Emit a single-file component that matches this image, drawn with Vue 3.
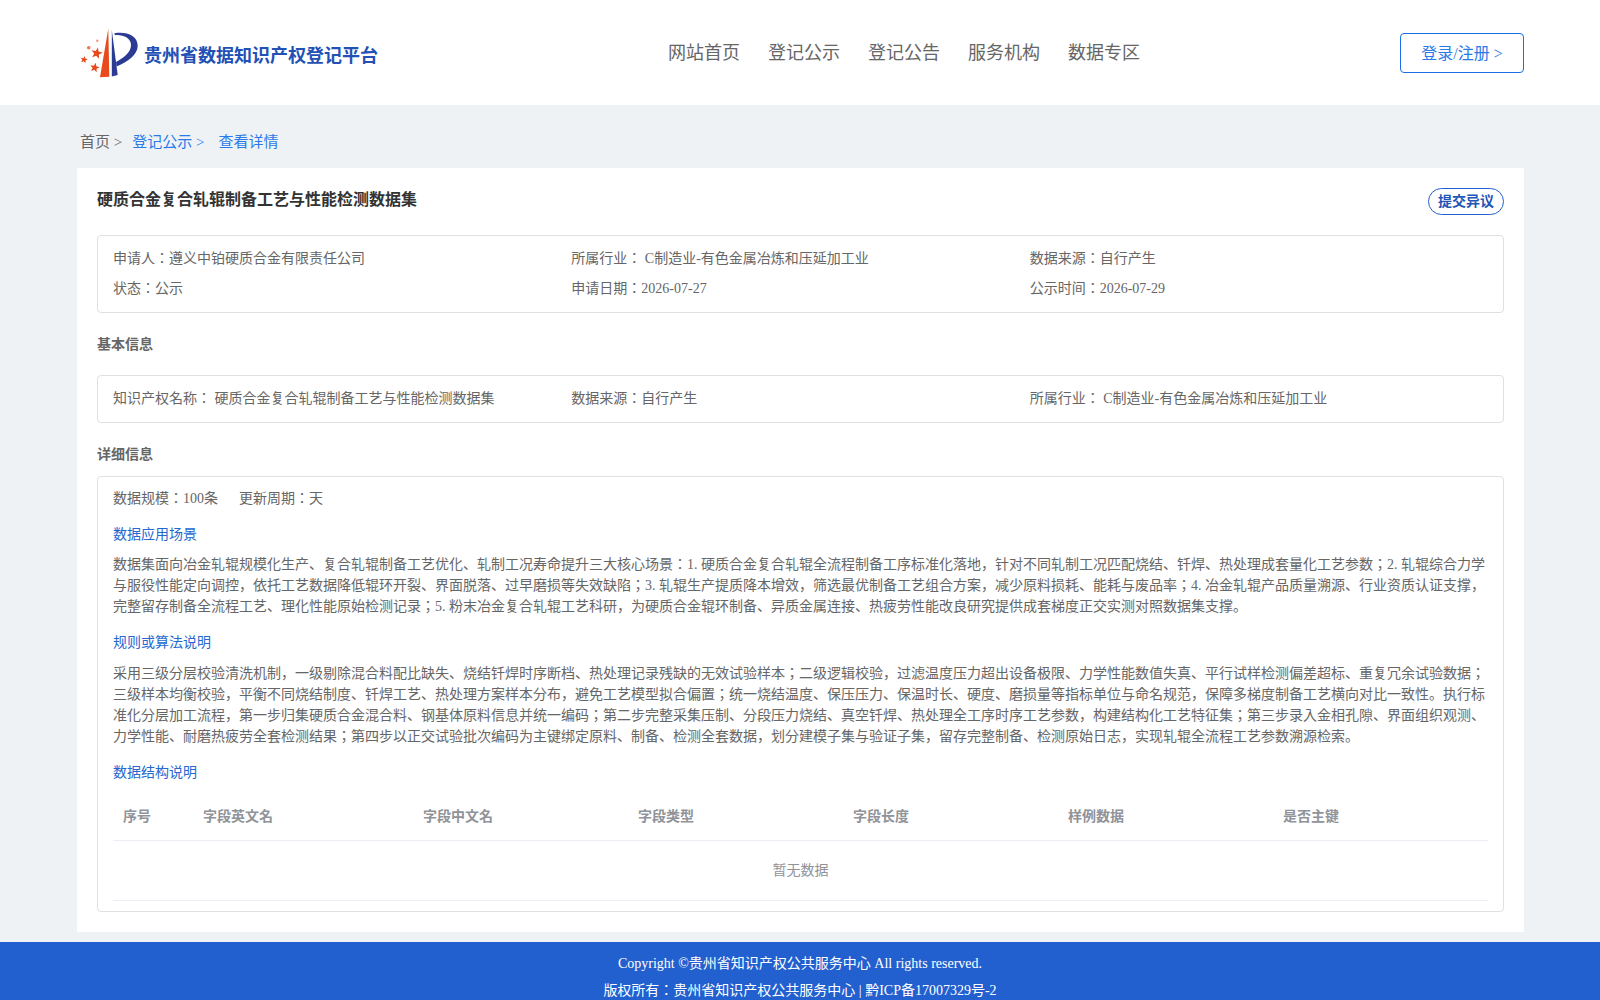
<script setup>
const nav = ['网站首页', '登记公示', '登记公告', '服务机构', '数据专区']
const summary = [
  '申请人：遵义中铂硬质合金有限责任公司',
  '所属行业： C制造业-有色金属冶炼和压延加工业',
  '数据来源：自行产生',
  '状态：公示',
  '申请日期：2026-07-27',
  '公示时间：2026-07-29'
]
const basic = [
  '知识产权名称： 硬质合金复合轧辊制备工艺与性能检测数据集',
  '数据来源：自行产生',
  '所属行业： C制造业-有色金属冶炼和压延加工业'
]
const columns = ['序号', '字段英文名', '字段中文名', '字段类型', '字段长度', '样例数据', '是否主键']
const scene = '数据集面向冶金轧辊规模化生产、复合轧辊制备工艺优化、轧制工况寿命提升三大核心场景：1. 硬质合金复合轧辊全流程制备工序标准化落地，针对不同轧制工况匹配烧结、钎焊、热处理成套量化工艺参数；2. 轧辊综合力学与服役性能定向调控，依托工艺数据降低辊环开裂、界面脱落、过早磨损等失效缺陷；3. 轧辊生产提质降本增效，筛选最优制备工艺组合方案，减少原料损耗、能耗与废品率；4. 冶金轧辊产品质量溯源、行业资质认证支撑，完整留存制备全流程工艺、理化性能原始检测记录；5. 粉末冶金复合轧辊工艺科研，为硬质合金辊环制备、异质金属连接、热疲劳性能改良研究提供成套梯度正交实测对照数据集支撑。'
const rules = '采用三级分层校验清洗机制，一级剔除混合料配比缺失、烧结钎焊时序断档、热处理记录残缺的无效试验样本；二级逻辑校验，过滤温度压力超出设备极限、力学性能数值失真、平行试样检测偏差超标、重复冗余试验数据；三级样本均衡校验，平衡不同烧结制度、钎焊工艺、热处理方案样本分布，避免工艺模型拟合偏置；统一烧结温度、保压压力、保温时长、硬度、磨损量等指标单位与命名规范，保障多梯度制备工艺横向对比一致性。执行标准化分层加工流程，第一步归集硬质合金混合料、钢基体原料信息并统一编码；第二步完整采集压制、分段压力烧结、真空钎焊、热处理全工序时序工艺参数，构建结构化工艺特征集；第三步录入金相孔隙、界面组织观测、力学性能、耐磨热疲劳全套检测结果；第四步以正交试验批次编码为主键绑定原料、制备、检测全套数据，划分建模子集与验证子集，留存完整制备、检测原始日志，实现轧辊全流程工艺参数溯源检索。'

function star(cx, cy, r, tilt) {
  const pts = []
  for (let i = 0; i < 10; i++) {
    const a = ((-90 + tilt + i * 36) * Math.PI) / 180
    const d = i % 2 === 0 ? r : r * 0.42
    pts.push((cx + d * Math.cos(a)).toFixed(2) + ',' + (cy + d * Math.sin(a)).toFixed(2))
  }
  return pts.join(' ')
}
const stars = [star(18.7, 27.3, 6, 12), star(6, 33.7, 3.9, 12), star(16.7, 41.7, 5, 12)]
</script>

<template>
  <div class="page">
    <header class="header">
      <div class="brand">
        <svg class="logo" width="62" height="54" viewBox="0 0 62 54">
          <path d="M22 51.3 L30.3 2.7 L31.3 50.7 Z" fill="#e8491d" />
          <path d="M33.8 4 L39.7 49 L33.8 50.5 Z" fill="#2b3a92" />
          <path d="M36.3 7.3 C48 5.5 59.7 9 59.7 20 C59.7 29 49 36 38.5 40.5 L38 36 C45 32 53 27 53 19 C53 12 45 8.5 37 9.2 Z" fill="#2b3a92" />
          <polygon v-for="(s, i) in stars" :key="i" :points="s" fill="#e8491d" />
          <circle cx="10.7" cy="21.7" r="1.8" fill="#ee7a55" />
          <circle cx="19.3" cy="14.7" r="1.2" fill="#f0957a" />
        </svg>
        <span class="brand-name">贵州省数据知识产权登记平台</span>
      </div>
      <nav class="nav">
        <a v-for="item in nav" :key="item" class="nav-item">{{ item }}</a>
      </nav>
      <button class="login">登录/注册 &gt;</button>
    </header>

    <main class="main">
      <div class="crumbs">
        <span class="crumb-home">首页 &gt;</span>
        <span class="crumb-link">登记公示 &gt;</span>
        <span class="crumb-current">查看详情</span>
      </div>

      <section class="card">
        <div class="title-row">
          <h1 class="title">硬质合金复合轧辊制备工艺与性能检测数据集</h1>
          <button class="objection">提交异议</button>
        </div>

        <div class="box grid3">
          <div v-for="item in summary" :key="item" class="cell">{{ item }}</div>
        </div>

        <h2 class="section first">基本信息</h2>
        <div class="box grid3">
          <div v-for="item in basic" :key="item" class="cell">{{ item }}</div>
        </div>

        <h2 class="section second">详细信息</h2>
        <div class="box detail">
          <div class="meta">
            <span>数据规模：100条</span>
            <span>更新周期：天</span>
          </div>
          <h3 class="sub sub-scene">数据应用场景</h3>
          <p class="para">{{ scene }}</p>
          <h3 class="sub sub-rules">规则或算法说明</h3>
          <p class="para">{{ rules }}</p>
          <h3 class="sub sub-struct">数据结构说明</h3>
          <table class="table">
            <colgroup>
              <col class="c-index" />
              <col class="c-name" />
              <col v-for="n in 5" :key="n" class="c-rest" />
            </colgroup>
            <thead>
              <tr>
                <th v-for="c in columns" :key="c">{{ c }}</th>
              </tr>
            </thead>
            <tbody>
              <tr>
                <td colspan="7">暂无数据</td>
              </tr>
            </tbody>
          </table>
        </div>
      </section>
    </main>

    <footer class="footer">
      <div>Copyright ©贵州省知识产权公共服务中心 All rights reserved.</div>
      <div>版权所有：贵州省知识产权公共服务中心 | 黔ICP备17007329号-2</div>
    </footer>
  </div>
</template>

<style>
html, body { margin: 0; background: #eff2f5; }
</style>

<style scoped>
.page {
  height: 1000px;
  overflow: hidden;
  background: #eff2f5;
  font-family: "Liberation Serif", "Noto Sans CJK JP", serif;
  font-size: 14px;
  color: #666;
}
.header {
  height: 105px;
  background: #fff;
  display: flex;
  align-items: center;
  padding: 0 76px 0 78px;
  box-sizing: border-box;
}
.brand { display: flex; align-items: center; width: 300px; margin-top: 1px; }
.logo { flex: none; }
.brand-name { font-size: 18px; font-weight: 700; color: #2350b5; margin-left: 4px; margin-top: 2px; white-space: nowrap; }
.nav { display: flex; gap: 28px; margin-left: 290px; font-size: 18px; color: #666; margin-top: -3px; }
.login {
  margin-left: auto;
  width: 124px;
  height: 40px;
  background: #fff;
  border: 1px solid #1a6fe8;
  border-radius: 4px;
  color: #2a7ae8;
  font: inherit;
  font-size: 16px;
  padding: 0 0 2px;
}
.main { padding: 0 76px 0 77px; }
.crumbs { height: 63px; box-sizing: border-box; padding: 18px 0 0 3px; font-size: 15px; line-height: 38px; display: flex; }
.crumb-home { color: #666; margin-right: 10px; }
.crumb-link { color: #2a7ae8; margin-right: 14px; }
.crumb-current { color: #2a7ae8; }
.card { background: #fff; padding: 20px; }
.title-row { display: flex; justify-content: space-between; align-items: flex-start; height: 47px; }
.title { margin: 0; font-size: 16px; line-height: 24px; font-weight: 700; color: #333; }
.objection {
  width: 76px;
  height: 27px;
  padding: 0 0 3px;
  background: #fff;
  border: 1px solid #2060d0;
  border-radius: 14px;
  color: #2255b5;
  font: inherit;
  font-size: 14px;
  font-weight: 700;
}
.box { border: 1px solid #e0e0e0; border-radius: 4px; }
.grid3 { display: grid; grid-template-columns: repeat(3, 1fr); padding: 8px 15px; }
.cell { line-height: 30px; white-space: nowrap; }
.section { margin: 0; font-size: 14px; line-height: 20px; font-weight: 700; color: #666; }
.section.first { padding: 22px 0 20px; }
.section.second { padding: 22px 0 11px; }
.detail { padding: 12px 15px 10px; }
.meta { line-height: 20px; display: flex; gap: 21px; }
.sub { font-size: 14px; line-height: 20px; font-weight: 400; color: #2468d0; }
.sub-scene { margin: 16px 0 9px; }
.sub-rules { margin: 16px 0 10px; }
.sub-struct { margin: 16px 0 0; }
.para { margin: 0; line-height: 21px; }
.table { width: 100%; border-collapse: collapse; table-layout: fixed; margin-top: 9px; }
.c-index { width: 80px; }
.c-name { width: 220px; }
.c-rest { width: 215px; }
.table th {
  height: 48px;
  padding: 0 10px 2px;
  text-align: left;
  font-weight: 700;
  color: #909399;
  border-bottom: 1px solid #ebeef5;
  box-sizing: border-box;
}
.table td {
  height: 60px;
  padding: 0 0 2px;
  text-align: center;
  color: #909399;
  border-bottom: 1px solid #ebeef5;
  box-sizing: border-box;
}
.footer {
  margin-top: 10px;
  background: #2260cf;
  color: #fff;
  text-align: center;
  line-height: 27px;
  padding: 8px 0;
}
</style>
